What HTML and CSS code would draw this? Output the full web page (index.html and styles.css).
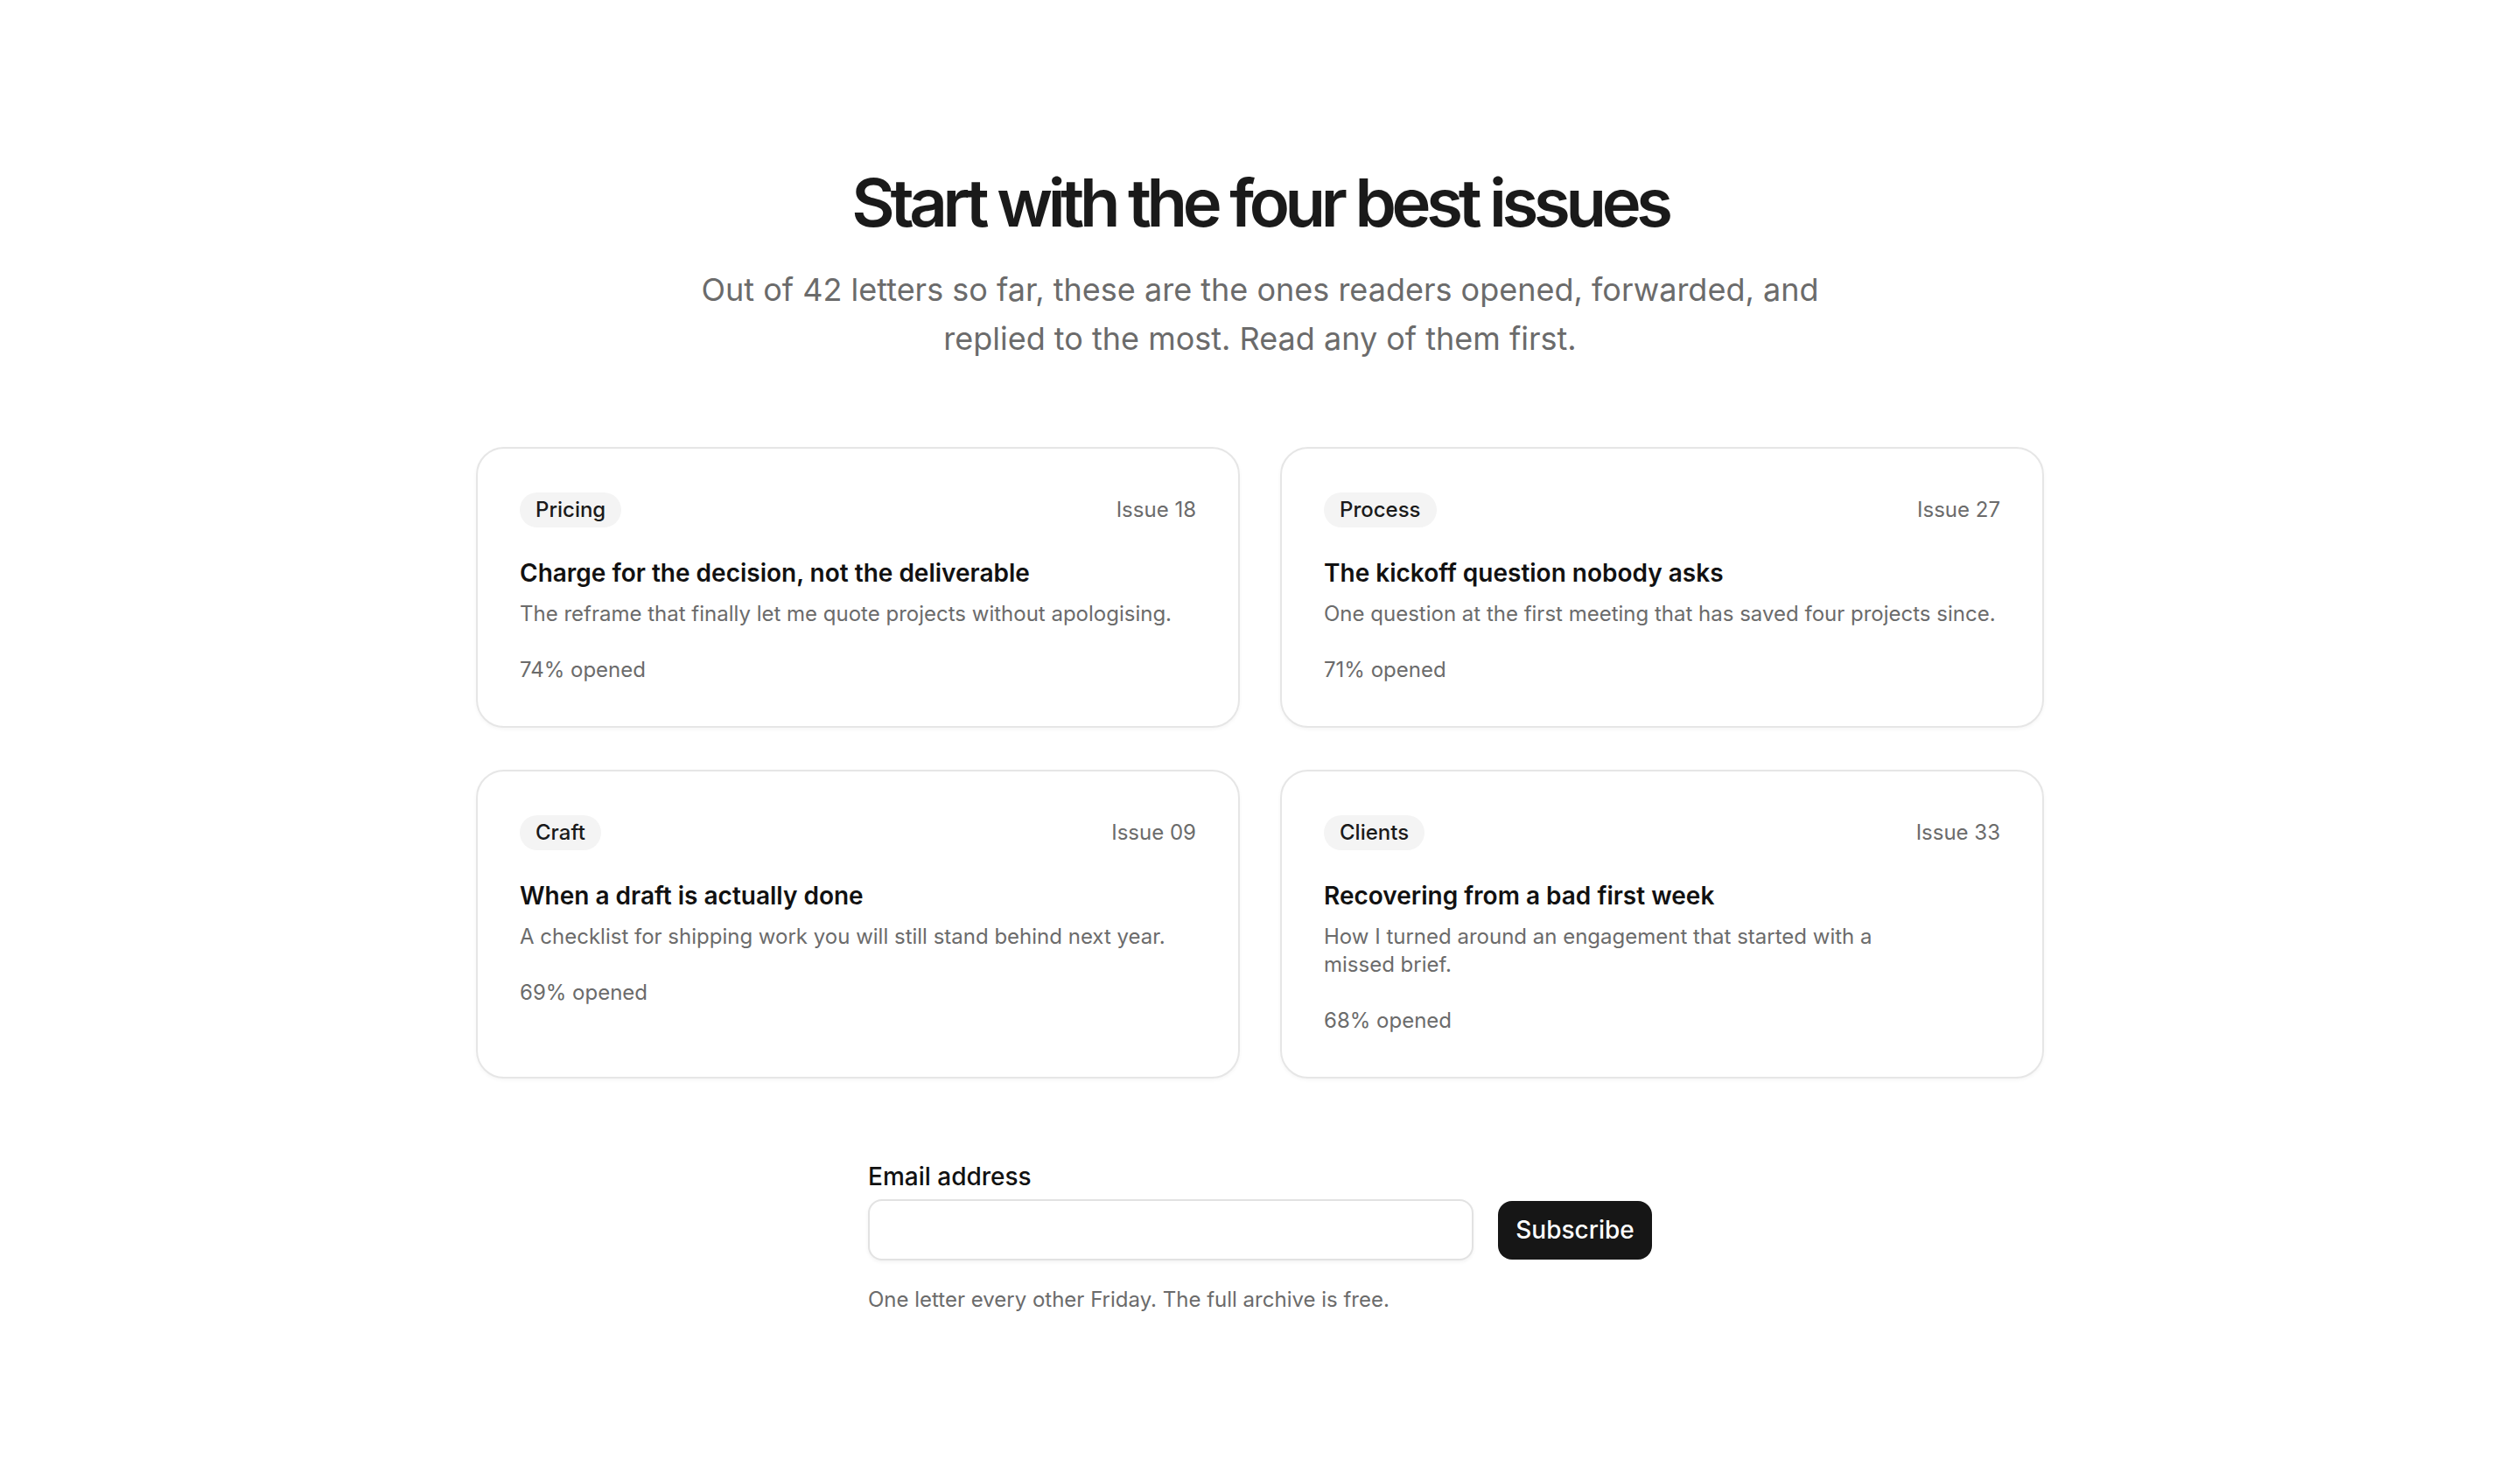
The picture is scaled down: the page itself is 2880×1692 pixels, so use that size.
FILE: index.html
```html
<!DOCTYPE html>
<html lang="en">
<head>
<meta charset="utf-8">
<title>Start with the four best issues</title>
<link rel="stylesheet" href="styles.css">
</head>
<body>
<main class="page">
  <header class="intro">
    <h1 class="intro-title">Start with the four best issues</h1>
    <p class="intro-sub">Out of 42 letters so far, these are the ones readers opened, forwarded, and replied to the most. Read any of them first.</p>
  </header>

  <section class="cards">
    <article class="card">
      <div class="card-head">
        <span class="tag">Pricing</span>
        <span class="issue">Issue 18</span>
      </div>
      <h2 class="card-title">Charge for the decision, not the deliverable</h2>
      <p class="card-desc">The reframe that finally let me quote projects without apologising.</p>
      <p class="card-stat">74% opened</p>
    </article>
    <article class="card">
      <div class="card-head">
        <span class="tag">Process</span>
        <span class="issue">Issue 27</span>
      </div>
      <h2 class="card-title">The kickoff question nobody asks</h2>
      <p class="card-desc">One question at the first meeting that has saved four projects since.</p>
      <p class="card-stat">71% opened</p>
    </article>
    <article class="card">
      <div class="card-head">
        <span class="tag">Craft</span>
        <span class="issue">Issue 09</span>
      </div>
      <h2 class="card-title">When a draft is actually done</h2>
      <p class="card-desc">A checklist for shipping work you will still stand behind next year.</p>
      <p class="card-stat">69% opened</p>
    </article>
    <article class="card">
      <div class="card-head">
        <span class="tag">Clients</span>
        <span class="issue">Issue 33</span>
      </div>
      <h2 class="card-title">Recovering from a bad first week</h2>
      <p class="card-desc">How I turned around an engagement that started with a missed brief.</p>
      <p class="card-stat">68% opened</p>
    </article>
  </section>

  <form class="signup">
    <label class="signup-label" for="email">Email address</label>
    <div class="signup-row">
      <input class="signup-input" id="email" type="email">
      <button class="signup-btn" type="button">Subscribe</button>
    </div>
    <p class="signup-note">One letter every other Friday. The full archive is free.</p>
  </form>
</main>
</body>
</html>
```

FILE: styles.css
```css
* {
  box-sizing: border-box;
}

html, body {
  margin: 0;
  padding: 0;
  background: #ffffff;
}

body {
  font-family: Inter, "Noto Sans", "Liberation Sans", sans-serif;
  color: #171717;
  -webkit-font-smoothing: antialiased;
}

.page {
  max-width: 1792px;
  margin: 0 auto;
  padding: 191px 0 160px;
}

.intro {
  text-align: center;
}

.intro-title {
  margin: 0;
  font-size: 76px;
  line-height: 80px;
  font-weight: 600;
  letter-spacing: -0.07em;
  color: #1a1a1a;
}

.intro-sub {
  max-width: 1344px;
  margin: 32px auto 0;
  font-size: 36px;
  line-height: 56px;
  color: #6b6b6b;
}

.cards {
  display: grid;
  grid-template-columns: 1fr 1fr;
  column-gap: 46px;
  row-gap: 48px;
  margin-top: 96px;
}

.card {
  border: 2px solid #e6e6e6;
  border-radius: 32px;
  padding: 50px 48px 46px;
  box-shadow: 0 2px 4px rgba(0, 0, 0, 0.04);
  background: #fff;
}

.card-head {
  display: flex;
  align-items: center;
  justify-content: space-between;
}

.tag {
  display: inline-block;
  padding: 4px 18px;
  border-radius: 999px;
  background: #f4f4f4;
  font-size: 24px;
  line-height: 32px;
  font-weight: 500;
  color: #1a1a1a;
}

.issue {
  font-size: 24px;
  line-height: 32px;
  color: #6b6b6b;
}

.card-title {
  margin: 32px 0 0;
  font-size: 28px;
  line-height: 40px;
  font-weight: 600;
  color: #111111;
}

.card-desc {
  margin: 11px 0 0;
  font-size: 24px;
  line-height: 32px;
  color: #6b6b6b;
  text-wrap: pretty;
}

.card-stat {
  margin: 30px 0 0;
  font-size: 24px;
  line-height: 36px;
  color: #6b6b6b;
}

.signup {
  max-width: 896px;
  margin: 96px auto 0;
}

.signup-label {
  display: block;
  font-size: 28px;
  line-height: 32px;
  font-weight: 500;
  color: #111111;
  margin-bottom: 10px;
}

.signup-row {
  display: flex;
  align-items: center;
  gap: 28px;
}

.signup-input {
  flex: 1;
  min-width: 0;
  height: 70px;
  border: 2px solid #e2e2e2;
  border-radius: 16px;
  padding: 0 24px;
  font: inherit;
  font-size: 28px;
  background: #fff;
  box-shadow: 0 2px 4px rgba(0, 0, 0, 0.05);
}

.signup-btn {
  width: 176px;
  height: 67px;
  padding: 0;
  border: 0;
  border-radius: 16px;
  background: #161616;
  color: #ffffff;
  font-family: inherit;
  font-size: 28px;
  font-weight: 500;
}

.signup-note {
  margin: 25px 0 0;
  font-size: 24px;
  line-height: 40px;
  color: #6b6b6b;
}
```
